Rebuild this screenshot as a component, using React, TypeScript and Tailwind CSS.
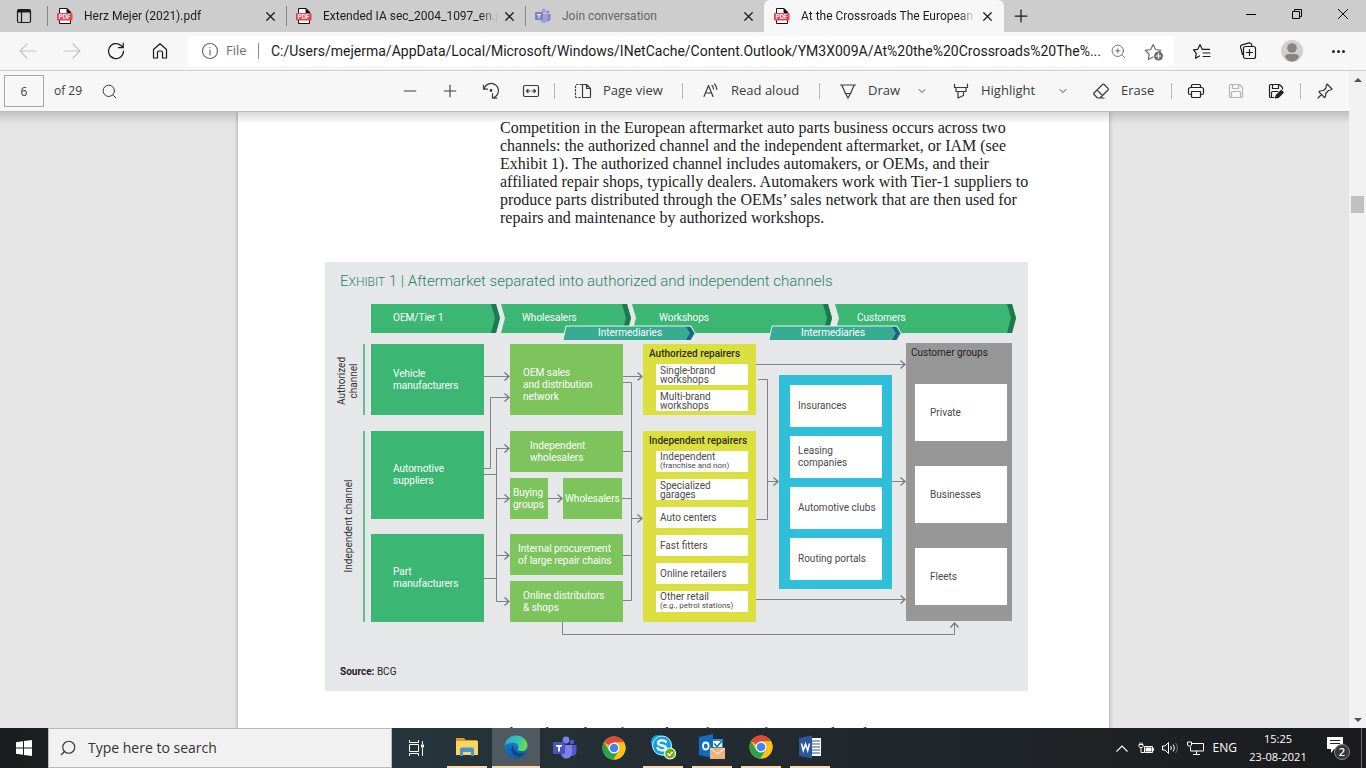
import type { ReactNode } from "react";
import { ChevronDown, Minus, Plus, Search, X, ZoomIn } from "lucide-react";

const url =
  "C:/Users/mejerma/AppData/Local/Microsoft/Windows/INetCache/Content.Outlook/YM3X009A/At%20the%20Crossroads%20The%...";

const tabs = [
  { title: "Herz Mejer (2021).pdf", icon: "pdf", active: false },
  { title: "Extended IA sec_2004_1097_en.p", icon: "pdf", active: false },
  { title: "Join conversation", icon: "teams", active: false },
  { title: "At the Crossroads The European", icon: "pdf", active: true },
];

const PdfIcon = () => (
  <svg viewBox="0 0 16 16" className="size-4 shrink-0">
    <path d="M2.500 .5h7.500l3.500 3.500v11.500h-11z" fill="#fff" stroke="#111" />
    <path d="M10 .5v4h4" fill="#111" stroke="#111" />
    <rect y="5" width="15.500" height="7.500" rx="1" fill="#e8434f" />
    <text x="7.700" y="11" textAnchor="middle" fontSize="6" fontWeight="700" fontFamily="Inter, sans-serif" fill="#fff">
      PDF
    </text>
  </svg>
);

const TeamsIcon = ({ className }: { className: string }) => (
  <svg viewBox="0 0 24 24" className={className}>
    <circle cx="19" cy="6" r="2.300" fill="#5059c9" />
    <circle cx="13" cy="4" r="3.400" fill="#7b83eb" />
    <path d="M16 9h7.500v7a4 4 0 0 1-6 3.500z" fill="#5059c9" />
    <path d="M8 9h11v8a5.500 5.500 0 0 1-11 0z" fill="#7b83eb" />
    <rect x="0" y="6" width="12" height="12" rx="1" fill="#4b53bc" />
    <path d="M3 9h6v1.700H6.900V15.500H5.100V10.700H3z" fill="#fff" />
  </svg>
);

// Thin line icon on a 20px grid
const Line = ({ children, className = "" }: { children: ReactNode; className?: string }) => (
  <svg
    viewBox="0 0 20 20"
    className={`size-5 shrink-0 ${className}`}
    fill="none"
    stroke="currentColor"
    strokeWidth="1.200"
    strokeLinecap="round"
    strokeLinejoin="round"
  >
    {children}
  </svg>
);

const TabStrip = () => (
  <header className="flex h-8 shrink-0 bg-[#cdcdcd] font-['Roboto',sans-serif] text-xs">
    <button aria-label="Tab actions" className="flex w-[47px] shrink-0 items-center justify-center">
      <Line>
        <rect x="3.500" y="3.500" width="13" height="13" rx="1.500" />
        <path d="M4 5h12" strokeWidth="3" strokeLinecap="butt" />
        <path d="M7.500 6v10" />
      </Line>
    </button>
    {tabs.map((tab) => (
      <div
        key={tab.title}
        className={
          tab.active
            ? "flex w-60 min-w-0 items-center rounded-t-md bg-[#f7f7f7] pr-[9px] pl-[10px]"
            : "flex w-[239px] min-w-0 items-center pr-2"
        }
      >
        {!tab.active && <span className="mr-[9px] h-5 w-px shrink-0 bg-[#858585]" />}
        {tab.icon === "pdf" ? <PdfIcon /> : <TeamsIcon className="size-4 shrink-0 opacity-60" />}
        <button
          className={
            tab.icon === "teams"
              ? "ml-[11px] min-w-0 flex-1 overflow-hidden text-left whitespace-nowrap text-[#666]"
              : "ml-[11px] min-w-0 flex-1 overflow-hidden mask-r-from-90% text-left whitespace-nowrap text-[#1c1c1c]"
          }
        >
          {tab.title}
        </button>
        <button aria-label={`Close ${tab.title}`} className="ml-1 shrink-0">
          <X size={15} strokeWidth={2} />
        </button>
      </div>
    ))}
    <button aria-label="New tab" className="flex w-[34px] shrink-0 items-center justify-center">
      <Plus size={20} strokeWidth={1.5} />
    </button>
    <div className="ml-auto flex shrink-0">
      <button aria-label="Minimize" className="flex h-7 w-[46px] items-center justify-center">
        <span className="h-px w-[10px] bg-black" />
      </button>
      <button aria-label="Restore" className="flex h-7 w-[46px] items-center justify-center">
        <svg viewBox="0 0 10 10" className="size-[10px]" fill="none" stroke="#000">
          <path d="M.5 2.500h7v7h-7zM2.500 2.500v-2h7v7h-2" />
        </svg>
      </button>
      <button aria-label="Close" className="flex h-7 w-[46px] items-center justify-center">
        <svg viewBox="0 0 10 10" className="size-[10px]" fill="none" stroke="#000">
          <path d="M0 0l10 10M10 0L0 10" />
        </svg>
      </button>
    </div>
  </header>
);

const AddressBar = () => (
  <nav className="flex h-[39px] shrink-0 items-center border-b border-[#cfcfcf] bg-[#f7f7f7] pr-[5px] pl-[6px]">
    <button aria-label="Back" className="flex w-11 justify-center text-[#c4c4c4]">
      <Line>
        <path d="M18 10H2M9 3l-7 7 7 7" />
      </Line>
    </button>
    <button aria-label="Forward" className="flex w-11 justify-center text-[#c4c4c4]">
      <Line>
        <path d="M2 10h16M11 3l7 7-7 7" />
      </Line>
    </button>
    <button aria-label="Refresh" className="flex w-11 justify-center">
      <Line>
        <path d="M17.500 10A7.500 7.500 0 1 1 15 4.500L17 6.500M17.200 2v4.700h-4.700" />
      </Line>
    </button>
    <button aria-label="Home" className="flex w-11 justify-center">
      <Line>
        <path d="M3.500 8.500L10 2.700l6.500 5.800V17h-4v-5.500a1.500 1.500 0 0 0-1.500-1.500H9a1.500 1.500 0 0 0-1.500 1.500V17h-4z" />
      </Line>
    </button>
    <div className="mr-[3px] ml-[6px] flex h-[30px] min-w-0 flex-1 items-center rounded-sm bg-white text-[#6b6b6b]">
      <Line className="ml-3">
        <circle cx="10" cy="10" r="7.500" />
        <path d="M10 9v5M10 6.500v.200" />
      </Line>
      <span className="ml-[6px] w-8 text-[13px]">File</span>
      <span className="h-4 w-px bg-[#8a8a8a]" />
      <input
        aria-label="Address"
        defaultValue={url}
        className="ml-3 min-w-0 flex-1 bg-transparent font-['Roboto',sans-serif] text-sm text-[#1b1b1b] outline-none"
      />
      <button aria-label="Zoom" className="flex w-9 justify-center">
        <ZoomIn size={17} strokeWidth={1.3} />
      </button>
      <button aria-label="Add to favorites" className="mr-[2px] flex w-9 justify-center">
        <Line>
          <path d="M9 16l-4.700 2.500.900-5.400-3.900-3.800 5.400-.800L9.100 3.600l2.400 4.900 5.400.800-2 2" />
          <circle cx="14.500" cy="15" r="4.500" fill="currentColor" stroke="none" />
          <path d="M14.500 12.700v4.600M12.200 15h4.600" stroke="#fff" />
        </Line>
      </button>
    </div>
    <button aria-label="Favorites" className="flex w-[50px] justify-center">
      <Line>
        <path d="M7.500 15l-4 2.300.800-4.900L1.500 8.900l4.300-.600L8 3.500l2.200 4.800h7.300M11 12h7M11 15.500h7" />
      </Line>
    </button>
    <button aria-label="Collections" className="flex w-[42px] justify-center">
      <Line>
        <path d="M4.500 13.500L2.600 6.200a2 2 0 0 1 1.500-2.400l7-1.900a2 2 0 0 1 2.400 1.500l.4 1.600M5.500 7.500a2 2 0 0 1 2-2h8a2 2 0 0 1 2 2v8a2 2 0 0 1-2 2h-8a2 2 0 0 1-2-2zM11.500 8.500v6M8.500 11.500h6" />
      </Line>
    </button>
    <button aria-label="Profile" className="flex w-[46px] justify-center">
      <svg viewBox="0 0 22 22" className="size-[22px]">
        <circle cx="11" cy="11" r="11" fill="#d2d0ce" />
        <circle cx="11" cy="8" r="4.800" fill="#868482" />
        <path d="M4 16.500c0-2 3-2.500 7-2.500s7 .500 7 2.500c-1 3-4 5-7 5s-6-2-7-5z" fill="#868482" />
      </svg>
    </button>
    <button aria-label="Settings and more" className="flex w-[46px] justify-center gap-[2px]">
      <span className="size-[3px] rounded-full bg-[#222]" />
      <span className="size-[3px] rounded-full bg-[#222]" />
      <span className="size-[3px] rounded-full bg-[#222]" />
    </button>
  </nav>
);

const Sep = ({ className }: { className: string }) => (
  <span className={`h-4 w-px shrink-0 bg-[#b8b8b8] ${className}`} />
);

const PdfToolbar = () => (
  <div className="flex h-[41px] shrink-0 items-center border-b border-[#bdbdbd] bg-[#f7f7f7] pr-1 pl-1 text-[13px] text-[#3b3b3b]">
    <input
      aria-label="Page number"
      defaultValue="6"
      className="h-8 w-10 border border-[#a8a8a8] text-center text-xs outline-none"
    />
    <span className="ml-[10px] text-xs">of 29</span>
    <button aria-label="Find" className="ml-[7px] flex w-10 justify-center">
      <Search size={17} strokeWidth={1.4} />
    </button>
    <div className="ml-auto flex items-center">
      <button aria-label="Zoom out" className="flex w-10 justify-center">
        <Minus size={20} strokeWidth={1.3} />
      </button>
      <button aria-label="Zoom in" className="flex w-10 justify-center">
        <Plus size={20} strokeWidth={1.3} />
      </button>
      <button aria-label="Rotate" className="flex w-[41px] justify-center">
        <Line>
          <path d="M3.200 8A7.200 7.200 0 1 1 13.200 16.200M11.500 12.500v4.700h4.200M2.500 4v4.200h4" />
          <circle cx="10" cy="9.500" r=".8" fill="currentColor" />
        </Line>
      </button>
      <button aria-label="Fit to width" className="flex w-10 justify-center">
        <Line>
          <rect x="2.500" y="4.500" width="15" height="11" rx="1.500" />
          <path d="M9 10H5.500m1.500-1.500L5.500 10 7 11.500M11 10h3.500M13 8.500l1.500 1.500-1.500 1.500" />
        </Line>
      </button>
      <Sep className="mr-2 ml-[3px]" />
      <button className="flex w-28 items-center pl-[10px] whitespace-nowrap">
        <Line>
          <path d="M8.500 3.500h-5a1 1 0 0 0-1 1v11a1 1 0 0 0 1 1h5" strokeDasharray="1.500 2" />
          <path d="M9.500 3.500h4l4 4v8a1 1 0 0 1-1 1h-7zM13.500 3.500v4h4" />
        </Line>
        <span className="ml-[10px]">Page view</span>
      </button>
      <Sep className="mr-2 ml-[7px]" />
      <button className="flex w-[120px] items-center pl-[10px] whitespace-nowrap">
        <Line>
          <path d="M3 15.500L7.500 4.500 12 15.500M4.500 12h6M11 4.500c1 .900 1.500 2 1.500 3.500M13.500 3c1.400 1.400 2.300 3 2.300 5.500" />
        </Line>
        <span className="ml-[10px]">Read aloud</span>
      </button>
      <Sep className="mr-2 ml-2" />
      <button className="flex w-[113px] items-center pl-[10px]">
        <Line>
          <path d="M2.500 4h15M4 4.500L7.500 12.500 10 17l2.500-4.500L16 4.500M7.500 12.500h5" />
        </Line>
        <span className="ml-[10px] w-11 text-left">Draw</span>
        <ChevronDown size={12} strokeWidth={1.8} className="ml-1" />
      </button>
      <button className="flex w-[140px] items-center pl-[10px]">
        <Line>
          <path d="M3.500 3v3.500h13V3M5 6.500v4h10v-4M7 10.500v6.500l5.500-2.500v-4" />
        </Line>
        <span className="ml-[10px] w-[72px] text-left">Highlight</span>
        <ChevronDown size={12} strokeWidth={1.8} className="ml-1" />
      </button>
      <button className="flex w-[84px] items-center pl-[10px]">
        <Line>
          <path d="M3 12l8.500-8.500a1.200 1.200 0 0 1 1.700 0l3.800 3.800a1.200 1.200 0 0 1 0 1.700L9 17H6.500L3 13.500a1 1 0 0 1 0-1.500zM6 9l5.500 5.500M9 17h4" />
        </Line>
        <span className="ml-[10px]">Erase</span>
      </button>
      <Sep className="mr-1 ml-[6px]" />
      <button aria-label="Print" className="flex w-10 justify-center text-[#222]">
        <Line>
          <path d="M5.500 13.500H4a1.500 1.500 0 0 1-1.500-1.500V8.500a2 2 0 0 1 2-2h11a2 2 0 0 1 2 2V12a1.500 1.500 0 0 1-1.500 1.500h-1.500M5.500 6.500v-2a1 1 0 0 1 1-1h7a1 1 0 0 1 1 1v2M5.500 10.500h9v5a1 1 0 0 1-1 1h-7a1 1 0 0 1-1-1z" />
        </Line>
      </button>
      <button aria-label="Save" disabled className="flex w-10 justify-center text-[#b5b5b5]">
        <Line>
          <path d="M3.500 4.500a1 1 0 0 1 1-1h9l3 3v9a1 1 0 0 1-1 1h-11a1 1 0 0 1-1-1zM6.500 3.500v4h6v-4M5.500 16.500v-5a1 1 0 0 1 1-1h7a1 1 0 0 1 1 1v5" />
        </Line>
      </button>
      <button aria-label="Save as" className="flex w-10 justify-center text-[#222]">
        <Line>
          <path d="M8 16.500H4.500a1 1 0 0 1-1-1v-11a1 1 0 0 1 1-1h9l3 3v1.500M6.500 3.500v4h6v-4M5.500 16v-4.500a1 1 0 0 1 1-1H12" />
          <path d="M9.500 17l.700-2.500 5-5 2 2-5 5z" fill="currentColor" />
        </Line>
      </button>
      <Sep className="mr-1 ml-1" />
      <button aria-label="Pin toolbar" className="flex w-10 justify-center text-[#333]">
        <Line>
          <path d="M12 3l5 5-1.500 1-2 .500-2.500 2.500-.500 3.500-1 1L4 11l1-1 3.500-.500L11 7l.300-2.500zM6.500 13.500L3 17" />
        </Line>
      </button>
    </div>
  </div>
);

// Process arrows along the top of the exhibit
const stages = [
  { label: "OEM/Tier 1", x: 46, end: 175, textX: 68, notch: 0 },
  { label: "Wholesalers", x: 176, end: 306, textX: 197, notch: 4 },
  { label: "Workshops", x: 307, end: 507, textX: 334, notch: 4 },
  { label: "Customers", x: 510, end: 691, textX: 532, notch: 4 },
];

const intermediaries = [
  { x: 238, end: 370, textX: 273 },
  { x: 444, end: 576, textX: 476 },
];

const connectors = [
  "M159 76.500H184",
  "M159 168.500H165.500V97.500H184",
  "M171.500 301V148.500H184",
  "M171.500 198.500H184",
  "M171.500 255.500H184",
  "M171.500 148V301.500H184",
  "M223 198.500H237",
  "M298 76.500H317",
  "M306.500 218.500H317",
  "M431 64.500H580",
  "M442.500 181.500H453",
  "M567 181.500H580",
  "M431 299.500H580",
  "M237.500 322V334.500H629.500V323",
];

const plainLines =
  "M159 174.500H171.500M159 278.500H171.500M298 82.500H306.500V300.500H298M298 151.500H306.500M297 198.500H306.500M298 255.500H306.500M433 79.500H442.500V219.500H431";

const greenBoxes = [
  { text: "Vehicle\nmanufacturers", box: "left-[46px] top-11 h-[71px] w-[113px] bg-[#3bb673] pl-[22px]" },
  { text: "Automotive\nsuppliers", box: "left-[46px] top-[131px] h-[88px] w-[113px] bg-[#3bb673] pl-[22px]" },
  { text: "Part\nmanufacturers", box: "left-[46px] top-[234px] h-[88px] w-[113px] bg-[#3bb673] pl-[22px]" },
  { text: "OEM sales\nand distribution\nnetwork", box: "left-[185px] top-11 h-[71px] w-[113px] bg-[#7dc45c] pl-[13px] pt-[10px]" },
  { text: "Independent\nwholesalers", box: "left-[185px] top-[131px] h-[41px] w-[113px] bg-[#7dc45c] pl-5" },
  { text: "Buying\ngroups", box: "left-[185px] top-[178px] h-[41px] w-[38px] bg-[#7dc45c] pl-[3px]" },
  { text: "Wholesalers", box: "left-[238px] top-[178px] h-[41px] w-[59px] bg-[#7dc45c] pl-[2px]" },
  { text: "Internal procurement\nof large repair chains", box: "left-[185px] top-[234px] h-[41px] w-[113px] bg-[#7dc45c] pl-2" },
  { text: "Online distributors\n& shops", box: "left-[185px] top-[281px] h-[41px] w-[113px] bg-[#7dc45c] pl-[13px]" },
];

const authorized = ["Single-brand\nworkshops", "Multi-brand\nworkshops"];
const independent = [
  { name: "Independent", note: "(franchise and non)" },
  { name: "Specialized\ngarages" },
  { name: "Auto centers" },
  { name: "Fast fitters" },
  { name: "Online retailers" },
  { name: "Other retail", note: "(e.g., petrol stations)" },
];
const services = ["Insurances", "Leasing\ncompanies", "Automotive clubs", "Routing portals"];
const customers = ["Private", "Businesses", "Fleets"];

const Diagram = () => (
  <div className="relative h-[340px] text-[10px] leading-3 whitespace-pre text-[#4a4a4a]">
    <svg viewBox="0 0 703 340" className="absolute top-0 left-0 h-[340px] w-[703px]" fill="none">
      <defs>
        <marker id="tip" viewBox="0 0 7 10" refX="6" refY="5" markerWidth="7" markerHeight="10" orient="auto" markerUnits="userSpaceOnUse">
          <path d="M1.500 1L6 5L1.500 9" stroke="#6f7479" strokeWidth="1.200" fill="none" />
        </marker>
      </defs>
      {stages.map((s) => (
        <g key={s.label}>
          <path
            d={`M${s.x} 4H${s.end - 4}L${s.end} 18L${s.end - 4} 33H${s.x}L${s.x + s.notch} 18Z`}
            fill="#3bb673"
          />
          <path
            d={`M${s.end - 9} 4H${s.end - 4}L${s.end} 18L${s.end - 4} 33H${s.end - 9}L${s.end - 5} 18Z`}
            fill="#1b7a50"
          />
          <text x={s.textX} y="21" fill="#fff">
            {s.label}
          </text>
        </g>
      ))}
      {intermediaries.map((m) => (
        <g key={m.x}>
          <path
            d={`M${m.x} 40L${m.x + 3} 26H${m.end - 4}L${m.end} 33L${m.end - 4} 40Z`}
            fill="#36ad92"
          />
          <path d={`M${m.x} 40L${m.x + 3} 26H${m.end - 4}L${m.end} 33`} stroke="#e8f3ef" />
          <path
            d={`M${m.end - 9} 27H${m.end - 5}L${m.end - 1} 33L${m.end - 5} 40H${m.end - 9}L${m.end - 5} 33Z`}
            fill="#205f83"
          />
          <text x={m.textX} y="36" fill="#fff">
            Intermediaries
          </text>
        </g>
      ))}
      <path d="M39 44V115M39 131V322" stroke="#63bd94" strokeWidth="2" />
      <g fill="#333" textAnchor="middle">
        <text transform="translate(20 81) rotate(-90)">Authorized</text>
        <text transform="translate(32 81) rotate(-90)">channel</text>
        <text transform="translate(27 226) rotate(-90)">Independent channel</text>
      </g>
      <g stroke="#7f8387">
        <path d={plainLines} />
        {connectors.map((d) => (
          <path key={d} d={d} markerEnd="url(#tip)" />
        ))}
      </g>
    </svg>

    {greenBoxes.map((b) => (
      <div key={b.text} className={`absolute flex items-center text-white ${b.box}`}>
        {b.text}
      </div>
    ))}

    <section className="absolute top-11 left-[318px] flex h-[71px] w-[113px] flex-col bg-[#dbe03f] pr-2 pl-[13px]">
      <h3 className="-ml-[7px] h-5 pt-1 font-medium text-[#2e2e1a]">Authorized repairers</h3>
      <ul className="flex flex-col gap-[5px] leading-[9px]">
        {authorized.map((name) => (
          <li key={name} className="flex h-[21px] items-center bg-white pl-1">
            {name}
          </li>
        ))}
      </ul>
    </section>

    <section className="absolute top-[131px] left-[318px] flex h-[191px] w-[113px] flex-col bg-[#dbe03f] pr-2 pl-[13px]">
      <h3 className="-ml-[7px] h-5 pt-1 font-medium text-[#2e2e1a]">Independent repairers</h3>
      <ul className="flex flex-col gap-[7px] leading-[9px]">
        {independent.map((item) => (
          <li key={item.name} className="flex h-[21px] flex-col justify-center bg-white pl-1">
            <span>{item.name}</span>
            {item.note && <span className="text-[8px] leading-[10px]">{item.note}</span>}
          </li>
        ))}
      </ul>
    </section>

    <ul className="absolute top-[75px] left-[454px] flex h-[214px] w-[113px] flex-col gap-[9px] bg-[#30bfd8] pt-[10px] pr-[10px] pl-[11px]">
      {services.map((name) => (
        <li key={name} className="flex h-[42px] items-center bg-white pl-2">
          {name}
        </li>
      ))}
    </ul>

    <section className="absolute top-[43px] left-[581px] h-[278px] w-[106px] bg-[#979797] pr-[5px] pl-[9px]">
      <h3 className="-ml-1 h-[41px] pt-1 text-[#222]">Customer groups</h3>
      <ul className="flex flex-col gap-[25px]">
        {customers.map((name) => (
          <li key={name} className="flex h-[57px] items-center bg-white pl-[15px]">
            {name}
          </li>
        ))}
      </ul>
    </section>
  </div>
);

const Document = () => (
  <main className="relative min-h-0 flex-1 overflow-hidden bg-[#e5e5e5] pr-[2px]">
    <div className="pointer-events-none absolute inset-x-0 top-0 z-10 h-3 bg-linear-to-b from-black/15 to-transparent" />
    <article className="mx-auto min-h-full w-[871px] bg-white shadow-[0_0_4px_rgba(0,0,0,0.35)]">
      <p className="pt-[7px] pl-[262px] font-['Liberation_Serif',serif] text-base leading-[18px] whitespace-pre text-[#222]">
        {`Competition in the European aftermarket auto parts business occurs across two
channels: the authorized channel and the independent aftermarket, or IAM (see
Exhibit 1). The authorized channel includes automakers, or OEMs, and their
affiliated repair shops, typically dealers. Automakers work with Tier-1 suppliers to
produce parts distributed through the OEMs’ sales network that are then used for
repairs and maintenance by authorized workshops.`}
      </p>
      <figure className="mt-[35px] ml-[87px] h-[429px] w-[703px] bg-[#e5e7e8] font-['Roboto',sans-serif]">
        <figcaption className="flex h-[38px] items-center pl-[15px] text-[15px] text-[#2c8269]">
          <span className="font-light">
            E<span className="text-xs">XHIBIT</span> 1 | Aftermarket separated into authorized and independent channels
          </span>
        </figcaption>
        <Diagram />
        <p className="pt-6 pl-[15px] text-[10px] leading-4 text-[#222]">
          <b className="font-bold">Source:</b> BCG
        </p>
      </figure>
      <p className="mt-[34px] pl-[262px] font-['Liberation_Serif',serif] text-base leading-[18px] whitespace-pre text-[#222]">
        The independent aftermarket is far more fragmented, with many participants
      </p>
    </article>
  </main>
);

const ScrollBar = () => (
  <div className="flex w-[17px] shrink-0 flex-col items-center bg-[#f1f1f1]">
    <button aria-label="Scroll up" className="flex h-[17px] w-full items-center justify-center">
      <svg viewBox="0 0 8 4" className="h-1 w-2">
        <path d="M0 4L4 0L8 4Z" fill="#505050" />
      </svg>
    </button>
    <div className="mt-[108px] h-[17px] w-[13px] bg-[#c1c1c1]" />
    <button aria-label="Scroll down" className="mt-auto flex h-[17px] w-full items-center justify-center">
      <svg viewBox="0 0 8 4" className="h-1 w-2">
        <path d="M0 0L4 4L8 0Z" fill="#505050" />
      </svg>
    </button>
  </div>
);

const ChromeLogo = () => (
  <svg viewBox="0 0 24 24" className="size-6">
    <circle cx="12" cy="12" r="11.500" fill="#fbc116" />
    <path d="M12 12L2 6.300A11.500 11.500 0 0 1 22 6.300H12z" fill="#e04a3a" />
    <path d="M2 6.300A11.500 11.500 0 0 0 11.500 23.500L17 14.500 12 12 7 14.500z" fill="#2ba24c" />
    <path d="M22 6.300A11.500 11.500 0 0 1 11.500 23.500L17 14.500V6.300z" fill="#fbc116" />
    <circle cx="12" cy="12" r="5.500" fill="#fff" />
    <circle cx="12" cy="12" r="4.300" fill="#4285f4" />
  </svg>
);

const ExplorerLogo = () => (
  <svg viewBox="0 0 24 24" className="size-6">
    <path d="M1 3h8l2 2h11v4H1z" fill="#d99b1b" />
    <path d="M1 6h22v14H1z" fill="#fcd462" />
    <path d="M5 21v-6.500a2 2 0 0 1 2-2h10a2 2 0 0 1 2 2V21h-3v-4H8v4z" fill="#4296c9" />
  </svg>
);

const EdgeLogo = () => (
  <svg viewBox="0 0 24 24" className="size-6">
    <defs>
      <linearGradient id="edgeTop" x1="0" y1="0" x2="1" y2="0.400">
        <stop offset="0" stopColor="#2aa5dc" />
        <stop offset="0.600" stopColor="#32c6b6" />
        <stop offset="1" stopColor="#66d954" />
      </linearGradient>
      <linearGradient id="edgeBody" x1="0" y1="0" x2="0" y2="1">
        <stop offset="0" stopColor="#1b86d0" />
        <stop offset="1" stopColor="#0f5cae" />
      </linearGradient>
    </defs>
    <circle cx="12" cy="12" r="11.500" fill="url(#edgeBody)" />
    <path d="M.5 11.500C1 5 6 .5 12 .5S23.500 5 23.500 10.500c0 3.500-2.500 5.500-5.500 5.500-3.500 0-4.500-1.200-4-2.200 1.500-2.600-.500-6-4.500-6S2 8.500.5 11.500z" fill="url(#edgeTop)" />
    <path d="M9 10c-3 3-2 10 5 12 3.500-.400 6-2.500 7.500-5-6 3.500-12 0-12.500-7z" fill="#14457f" />
  </svg>
);

const SkypeLogo = () => (
  <svg viewBox="0 0 26 26" className="size-[26px]">
    <circle cx="8" cy="8" r="7" fill="#0aa5e8" />
    <circle cx="15" cy="15" r="7.500" fill="#0aa5e8" />
    <circle cx="12" cy="11.500" r="9.500" fill="#0aa5e8" stroke="#d9f1fb" />
    <path d="M16 8c-1-2-8-2.500-8 1 0 3.500 8 1.500 8 5 0 3.500-7 3-8.500 0" fill="none" stroke="#fff" strokeWidth="2.300" strokeLinecap="round" />
    <circle cx="20" cy="19.500" r="5.500" fill="#6bb00b" stroke="#fff" strokeWidth="1.200" />
    <path d="M17.500 19.500l2 2 3-3.500" fill="none" stroke="#fff" strokeWidth="1.500" />
  </svg>
);

const OutlookLogo = () => (
  <svg viewBox="0 0 26 26" className="size-[26px]">
    <path d="M12 5h12v12H12z" fill="#2a8dd8" />
    <path d="M14 7h9v6h-9z" fill="#fff" />
    <path d="M15 9.500l3 3 5-5.500" fill="none" stroke="#0a66b7" strokeWidth="1.500" />
    <path d="M0 3l14-3v24L0 21z" fill="#0f6cbf" />
    <ellipse cx="6.800" cy="12" rx="2.800" ry="3.500" fill="none" stroke="#fff" strokeWidth="1.800" />
    <path d="M11 14h15v11H11z" fill="#e9b47d" />
    <path d="M11 14l7.500 6 7.500-6" fill="none" stroke="#fff" />
  </svg>
);

const WordLogo = () => (
  <svg viewBox="0 0 24 24" className="size-6">
    <path d="M12 3h11v18H12z" fill="#fff" />
    <path d="M14 6h8M14 9h8M14 12h8M14 15h8M14 18h8" stroke="#2b579a" strokeWidth="1.200" />
    <path d="M1 3l13-2.500v23L1 21z" fill="#2b579a" />
    <path d="M3.500 8.500l1.800 7 2.200-6.500 2.200 6.500 1.800-7" fill="none" stroke="#fff" strokeWidth="1.500" />
  </svg>
);

const apps = [
  { name: "File Explorer", logo: <ExplorerLogo />, state: "open" },
  { name: "Microsoft Edge", logo: <EdgeLogo />, state: "active" },
  { name: "Microsoft Teams", logo: <TeamsIcon className="size-6" />, state: "" },
  { name: "Google Chrome", logo: <ChromeLogo />, state: "" },
  { name: "Skype for Business", logo: <SkypeLogo />, state: "open" },
  { name: "Outlook", logo: <OutlookLogo />, state: "open" },
  { name: "Google Chrome (2)", logo: <ChromeLogo />, state: "open" },
  { name: "Word", logo: <WordLogo />, state: "open" },
];

const Taskbar = () => (
  <footer className="flex h-10 shrink-0 bg-linear-to-r from-[#1b1c1d] via-[#26343b] via-30% to-[#1b1b1d] text-white">
    <button aria-label="Start" className="flex w-12 shrink-0 items-center justify-center">
      <svg viewBox="0 0 16 16" className="size-4" fill="#fff">
        <path d="M0 2.200L7 1.200V7.500H0zM8 1.100L16 0V7.500H8zM0 8.500H7V14.800L0 13.800zM8 8.500H16V16L8 14.900z" />
      </svg>
    </button>
    <label className="flex w-[344px] items-center border border-[#b9b9b9] bg-[#f1f1f1] pl-[10px] text-[#333]">
      <Search size={18} strokeWidth={1.5} className="-scale-x-100" />
      <input
        aria-label="Search"
        placeholder="Type here to search"
        className="ml-[11px] min-w-0 flex-1 bg-transparent text-sm outline-none placeholder:text-[#333]"
      />
    </label>
    <button aria-label="Task view" className="flex w-12 shrink-0 items-center justify-center">
      <svg viewBox="0 0 17 16" className="h-4 w-[17px]" fill="none" stroke="#fff">
        <path d="M1.500 4.500h9v7h-9zM1.500 0v2.500h9V0M1.500 16v-2.500h9V16M14.500 1v3M14.500 8v8" />
        <path d="M13 4.500h3v3h-3z" fill="#fff" stroke="none" />
      </svg>
    </button>
    <div className="ml-[3px] flex">
      {apps.map((app) => (
        <button
          key={app.name}
          aria-label={app.name}
          className={
            app.state === "active"
              ? "mr-px flex w-12 flex-col items-center bg-[#50595f]"
              : "mr-px flex w-12 flex-col items-center"
          }
        >
          <span className="flex flex-1 items-center">{app.logo}</span>
          {app.state === "open" && <span className="h-[2px] w-10 bg-[#fbd9ab]" />}
          {app.state === "active" && <span className="h-[2px] w-12 bg-[#fbd9ab]" />}
        </button>
      ))}
    </div>
    <div className="ml-auto flex shrink-0 items-center text-xs">
      <button aria-label="Show hidden icons" className="flex w-6 justify-center">
        <svg viewBox="0 0 12 7" className="h-[7px] w-3" fill="none" stroke="#fff" strokeWidth="1.200">
          <path d="M.5 6.500L6 1l5.500 5.500" />
        </svg>
      </button>
      <svg viewBox="0 0 16 12" className="ml-1 h-3 w-4" fill="none" stroke="#fff">
        <path d="M1 2.500h4v2c0 1.500-4 1.500-4 0zM2 .5v2M4 .5v2M3 6v4.500h3" />
        <path d="M6.500 4.500h8v6h-8zM15.500 6v3" />
        <path d="M7.500 5.500h6v4h-6z" fill="#fff" stroke="none" />
      </svg>
      <svg viewBox="0 0 17 14" className="ml-2 h-[14px] w-[17px]" fill="none" stroke="#fff">
        <path d="M.5 5h2.500L6.500 1.500v11L3 9H.5z" />
        <path d="M8.500 5c1 1 1 3 0 4M11 3.500c1.700 2 1.700 5 0 7" />
        <path d="M13.500 2c2.500 3 2.500 7 0 10" stroke="#777" />
      </svg>
      <svg viewBox="0 0 17 14" className="ml-2 h-[14px] w-[17px]" fill="none" stroke="#fff">
        <path d="M5 2.500h11.500v7.500H3.500V6M9.500 10v3M6 13.500h7M.5 1v3c0 1.500 4 1.500 4 0V1z" />
      </svg>
      <span className="ml-[9px]">ENG</span>
      <time className="ml-[10px] w-[62px] text-center text-[11px] leading-[18px]">
        15:25
        <br />
        23-08-2021
      </time>
      <button aria-label="2 new notifications" className="ml-[11px] flex w-9 justify-center">
        <svg viewBox="0 0 26 26" className="size-[26px]">
          <path d="M2 2h16v12H9l-3 4v-4H2z" fill="#fff" />
          <path d="M5 5.500h10M5 8.500h10" stroke="#222" />
          <circle cx="17" cy="17" r="7.500" fill="#38393a" stroke="#8a8a8a" />
          <text x="17" y="21" textAnchor="middle" fontSize="11" fontWeight="600" fill="#fff">
            2
          </text>
        </svg>
      </button>
      <span className="mr-1 ml-[5px] h-10 w-px bg-[#6b6b6b]" />
    </div>
  </footer>
);

export default function App() {
  return (
    <div className="flex h-screen flex-col overflow-hidden font-['Open_Sans','Noto_Sans',sans-serif] text-[#1b1b1b]">
      <TabStrip />
      <AddressBar />
      <div className="flex min-h-0 flex-1">
        <div className="flex min-w-0 flex-1 flex-col">
          <PdfToolbar />
          <Document />
        </div>
        <ScrollBar />
      </div>
      <Taskbar />
    </div>
  );
}
